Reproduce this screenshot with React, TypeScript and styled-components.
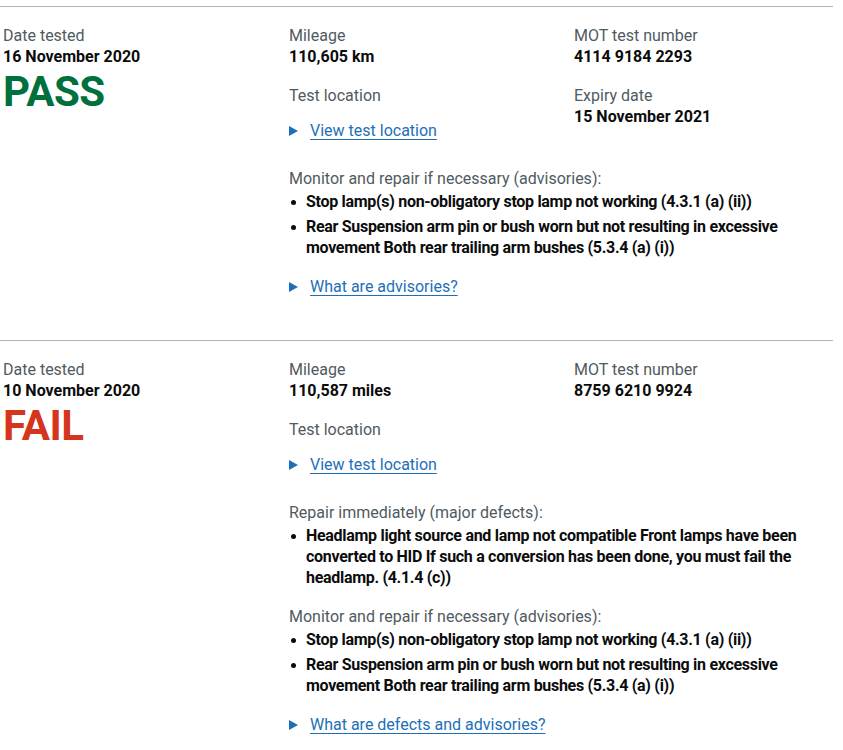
import styled, { createGlobalStyle } from "styled-components";

const GlobalStyle = createGlobalStyle`
  body {
    margin: 0;
    background: #ffffff;
    color: #0b0c0c;
    font-family: Roboto, "Liberation Sans", Arial, sans-serif;
    -webkit-font-smoothing: antialiased;
  }
`;

type DefectGroup = { title: string; items: string[] };

type TestRecord = {
  date: string;
  passed: boolean;
  mileage: string;
  testNumber: string;
  expiry?: string;
  defects: DefectGroup[];
  helpLink: string;
};

const advisories: DefectGroup = {
  title: "Monitor and repair if necessary (advisories):",
  items: [
    "Stop lamp(s) non-obligatory stop lamp not working (4.3.1 (a) (ii))",
    "Rear Suspension arm pin or bush worn but not resulting in excessive movement Both rear trailing arm bushes (5.3.4 (a) (i))",
  ],
};

const records: TestRecord[] = [
  {
    date: "16 November 2020",
    passed: true,
    mileage: "110,605 km",
    testNumber: "4114 9184 2293",
    expiry: "15 November 2021",
    defects: [advisories],
    helpLink: "What are advisories?",
  },
  {
    date: "10 November 2020",
    passed: false,
    mileage: "110,587 miles",
    testNumber: "8759 6210 9924",
    defects: [
      {
        title: "Repair immediately (major defects):",
        items: [
          "Headlamp light source and lamp not compatible Front lamps have been converted to HID If such a conversion has been done, you must fail the headlamp. (4.1.4 (c))",
        ],
      },
      advisories,
    ],
    helpLink: "What are defects and advisories?",
  },
];

function App() {
  return (
    <Page>
      <GlobalStyle />
      {records.map((r) => (
        <Record key={r.testNumber}>
          <Summary>
            <Label>Date tested</Label>
            <Value>{r.date}</Value>
            <Result passed={r.passed}>{r.passed ? "PASS" : "FAIL"}</Result>
          </Summary>
          <Details>
            <Facts>
              <div>
                <Label>Mileage</Label>
                <Value>{r.mileage}</Value>
                <Label spaced>Test location</Label>
                <Toggle>
                  <Arrow viewBox="0 0 9 10" aria-hidden="true">
                    <polygon points="0,0 9,5 0,10" />
                  </Arrow>
                  <ToggleLink href="#">View test location</ToggleLink>
                </Toggle>
              </div>
              <div>
                <Label>MOT test number</Label>
                <Value>{r.testNumber}</Value>
                {r.expiry && (
                  <>
                    <Label spaced>Expiry date</Label>
                    <Value>{r.expiry}</Value>
                  </>
                )}
              </div>
            </Facts>
            {r.defects.map((g, i) => (
              <Group key={g.title} first={i === 0}>
                <Label>{g.title}</Label>
                <DefectList>
                  {g.items.map((item) => (
                    <Defect key={item}>{item}</Defect>
                  ))}
                </DefectList>
              </Group>
            ))}
            <Toggle help>
              <Arrow viewBox="0 0 9 10" aria-hidden="true">
                <polygon points="0,0 9,5 0,10" />
              </Arrow>
              <ToggleLink href="#">{r.helpLink}</ToggleLink>
            </Toggle>
          </Details>
        </Record>
      ))}
    </Page>
  );
}

export default App;

const Page = styled.main`
  width: 833px;
  padding-top: 6px;
`;

const Record = styled.section`
  display: grid;
  grid-template-columns: 286px 1fr;
  border-top: 1px solid #b1b4b6;
  padding: 18px 0 43px 3px;
`;

const Summary = styled.div`
  display: flex;
  flex-direction: column;
`;

const Details = styled.div`
  display: flex;
  flex-direction: column;
  margin-right: -8px;
`;

const Facts = styled.div`
  display: grid;
  grid-template-columns: 285px 1fr;
`;

const Label = styled.div<{ spaced?: boolean }>`
  font-size: 16px;
  line-height: 21px;
  color: #505a5f;
  margin-top: ${(p) => (p.spaced ? "18px" : "0")};
`;

const Value = styled.div`
  font-size: 16px;
  line-height: 21px;
  font-weight: 700;
  color: #0b0c0c;
`;

const Result = styled.div<{ passed: boolean }>`
  margin-top: 3px;
  font-size: 42px;
  line-height: 44px;
  font-weight: 700;
  letter-spacing: -0.5px;
  color: ${(p) => (p.passed ? "#00703c" : "#d4351c")};
`;

const Toggle = styled.div<{ help?: boolean }>`
  display: flex;
  align-items: center;
  gap: 12px;
  margin-top: ${(p) => (p.help ? "18px" : "14px")};
  font-size: 16px;
  line-height: 21px;
`;

const Arrow = styled.svg`
  width: 9px;
  height: 10px;
  fill: #1d70b8;
  flex: none;
`;

const ToggleLink = styled.a`
  color: #1d70b8;
  text-decoration: underline;
  text-decoration-thickness: 1px;
  text-underline-offset: 3px;
`;

const Group = styled.div<{ first: boolean }>`
  margin-top: ${(p) => (p.first ? "27px" : "18px")};
`;

const DefectList = styled.ul`
  list-style: none;
  margin: 2px 0 0;
  padding: 0;
`;

const Defect = styled.li`
  display: grid;
  grid-template-columns: 17px 1fr;
  font-size: 16px;
  line-height: 21px;
  font-weight: 700;
  letter-spacing: -0.3px;
  color: #0b0c0c;

  & + & {
    margin-top: 4px;
  }

  &::before {
    content: "";
    width: 5px;
    height: 5px;
    margin: 9px 0 0 2px;
    border-radius: 50%;
    background: #0b0c0c;
  }
`;
